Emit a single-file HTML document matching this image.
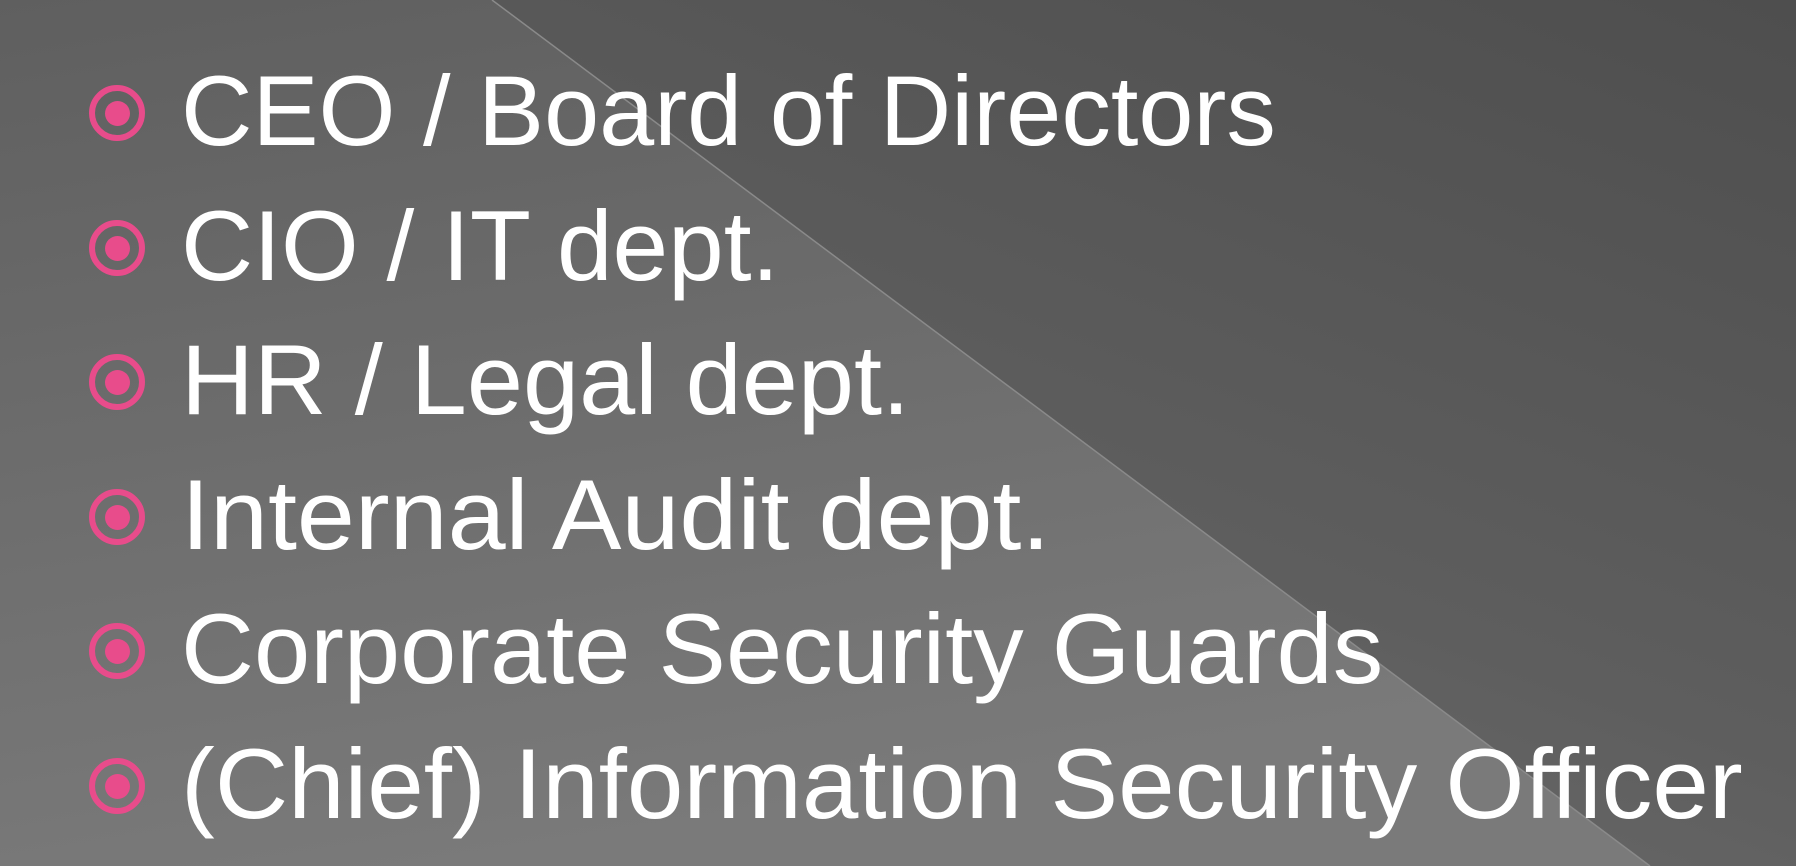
<!DOCTYPE html>
<html><head><style>
html,body{margin:0;padding:0}
body{width:1796px;height:866px;overflow:hidden;position:relative;
background:linear-gradient(200deg,#4e4e4e 0%,#5e5e5e 50%,#777 100%);font-family:"Liberation Sans",sans-serif}
.tri{position:absolute;left:0;top:0;width:1796px;height:866px}
.b{position:absolute;left:89px;width:44px;height:44px;border:6px solid #e84c8b;border-radius:50%}
.b::after{content:"";position:absolute;left:9.5px;top:9.5px;width:25px;height:25px;border-radius:50%;background:#e84c8b}
.t{position:absolute;left:181px;font-size:99px;line-height:99px;color:#fff;white-space:nowrap;transform-origin:0 50%}
</style></head><body>
<svg class="tri" width="1796" height="866"><defs><linearGradient id="g" x1="0" y1="0" x2="0.3" y2="1"><stop offset="0" stop-color="#5f5f5f"/><stop offset="1" stop-color="#7a7a7a"/></linearGradient></defs>
<polygon points="0,0 492,0 1650,866 0,866" fill="url(#g)"/>
<line x1="492" y1="0" x2="1650" y2="866" stroke="#8a8a8a" stroke-width="1.5"/></svg>
<div class="b" style="top:85px"></div><div class="t" style="top:61px">CEO / Board of Directors</div>
<div class="b" style="top:220px"></div><div class="t" style="top:196px;transform:scaleX(1.01)">CIO / IT dept.</div>
<div class="b" style="top:354px"></div><div class="t" style="top:330px;transform:scaleX(1.019)">HR / Legal dept.</div>
<div class="b" style="top:489px"></div><div class="t" style="top:465px;transform:scaleX(1.053)">Internal Audit dept.</div>
<div class="b" style="top:623px"></div><div class="t" style="top:599px;transform:scaleX(1.021)">Corporate Security Guards</div>
<div class="b" style="top:758px"></div><div class="t" style="top:734px;transform:scaleX(1.026)">(Chief) Information Security Officer</div>
</body></html>
